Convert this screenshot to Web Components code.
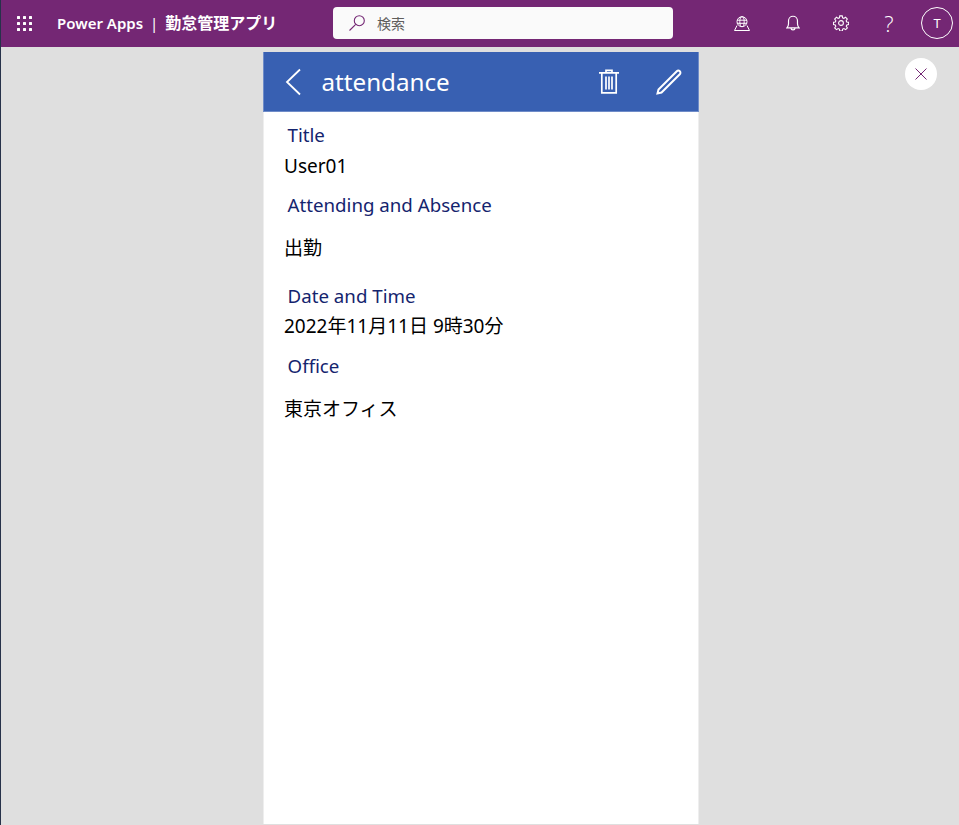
<!DOCTYPE html>
<html lang="ja">
<head>
<meta charset="utf-8">
<title>勤怠管理アプリ</title>
<style>
  html, body { margin: 0; height: 100%; }
  body { font-family: "Noto Sans", "Noto Sans CJK JP", sans-serif; overflow: hidden; }
</style>
</head>
<body>
<app-shell>
  <suite-bar slot="top"></suite-bar>
  <record-card>
    <record-field label="Title" value="User01" style="--value-line: 33px"></record-field>
    <record-field label="Attending and Absence" value="出勤" tall></record-field>
    <record-field label="Date and Time" value="2022年11月11日 9時30分"></record-field>
    <record-field label="Office" value="東京オフィス" tall></record-field>
  </record-card>
  <close-button slot="aside"></close-button>
</app-shell>

<script>
class AppShell extends HTMLElement {
  constructor () {
    super()
    this.attachShadow({ mode: 'open' }).innerHTML = `
    <style>
      :host {
        display: flex;
        flex-direction: column;
        width: 959px;
        height: 825px;
        box-sizing: border-box;
        border-left: 1px solid #27324a;
        background: #dfdfdf;
      }
      .stage {
        flex: 1;
        min-height: 0;
        display: grid;
        grid-template-columns: 262px 436px 1fr;
      }
      .aside {
        grid-column: 3;
        display: flex;
        justify-content: flex-end;
        padding: 11px 22px 0 0;
      }
      .main { grid-column: 2; min-height: 0; }
    </style>
    <slot name="top"></slot>
    <div class="stage">
      <div class="main"><slot></slot></div>
      <div class="aside"><slot name="aside"></slot></div>
    </div>`
  }
}

class SuiteBar extends HTMLElement {
  constructor () {
    super()
    const dots = []
    for (const y of [0, 6, 12]) {
      for (const x of [0, 6, 12]) {
        dots.push(`<rect x="${x}" y="${y}" width="3" height="3" rx=".5"/>`)
      }
    }
    this.attachShadow({ mode: 'open' }).innerHTML = `
    <style>
      :host {
        display: flex;
        align-items: center;
        height: 47px;
        box-sizing: border-box;
        padding-bottom: 1px;
        background: #742774;
        color: #fff;
        font-family: "Noto Sans", "Noto Sans CJK JP", sans-serif;
      }
      svg { display: block; fill: none; stroke: #fff; }
      .waffle { margin-left: 16px; fill: #fff; stroke: none; }
      .brand {
        margin: 0 0 2px 25px;
        width: 276px;
        font-size: 15px;
        font-weight: 600;
        white-space: nowrap;
      }
      .brand .sep { margin: 0 3px; font-weight: 400; }
      .brand .app { font-size: 16px; font-weight: 700; }
      .search {
        width: 340px;
        height: 32px;
        box-sizing: border-box;
        display: flex;
        align-items: center;
        gap: 11px;
        padding-left: 15px;
        background: #fafafa;
        border-radius: 4px;
        color: #605e5c;
        font-size: 14px;
      }
      .search svg { stroke: #742774; }
      .tools {
        margin-left: auto;
        display: flex;
        align-items: center;
        padding-right: 6px;
      }
      .tool {
        width: 48px;
        height: 46px;
        display: flex;
        align-items: center;
        justify-content: center;
      }
      .globe { margin-right: 3px; }
      .help { font-size: 22px; font-weight: 300; font-family: "Open Sans", sans-serif; }
      .avatar {
        width: 30px;
        height: 30px;
        margin-left: 8px;
        border: 1px solid #fff;
        border-radius: 50%;
        display: flex;
        align-items: center;
        justify-content: center;
        font-size: 13px;
      }
    </style>
    <svg class="waffle" width="15" height="15" viewBox="0 0 15 15">${dots.join('')}</svg>
    <div class="brand">Power Apps<span class="sep"> | </span><span class="app">勤怠管理アプリ</span></div>
    <div class="search">
      <svg width="18" height="18" viewBox="0 0 18 18" stroke-width="1.1">
        <circle cx="11.3" cy="6.7" r="5"/>
        <path d="M7.7 10.3 1.5 16.5"/>
      </svg>
      <span>検索</span>
    </div>
    <div class="tools">
      <div class="tool globe">
        <svg width="16" height="15" viewBox="0 0 16 15" stroke-width="1">
          <circle cx="8" cy="5.700" r="5"/>
          <ellipse cx="8" cy="5.700" rx="2.200" ry="5"/>
          <path d="M3 4.200h10M3 7.300h10M3 9.500.5 14.500h15L13 9.500"/>
        </svg>
      </div>
      <div class="tool">
        <svg width="14" height="16" viewBox="0 0 13 15" stroke-width="1.100">
          <path d="M.8 12h11.400c-.9-1-1.500-1.900-1.500-3.800V5.400a4.200 4.200 0 0 0-8.400 0v2.800c0 1.900-.6 2.800-1.500 3.800Z"/>
          <path d="M4.700 12.200a1.800 1.800 0 0 0 3.600 0"/>
        </svg>
      </div>
      <div class="tool">
        <svg width="16" height="16" viewBox="0 0 18 18" stroke-width="1.200">
          <circle cx="9" cy="9" r="2.700"/>
          <path d="M7.600 1h2.800l.4 2.200 1.400.6 1.900-1.300 2 2-1.300 1.900.6 1.400 2.200.4v2.600l-2.100.4-.6 1.400 1.300 1.900-2 2-1.900-1.300-1.400.6-.4 2.200H7.600l-.4-2.200-1.400-.6-1.900 1.300-2-2 1.300-1.900-.6-1.400-2.100-.4V8.200l2.100-.4.6-1.400-1.300-1.900 2-2 1.900 1.300 1.400-.6Z"/>
        </svg>
      </div>
      <div class="tool help">?</div>
      <div class="avatar">T</div>
    </div>`
  }
}

class RecordCard extends HTMLElement {
  constructor () {
    super()
    this.attachShadow({ mode: 'open' }).innerHTML = `
    <style>
      :host {
        display: flex;
        flex-direction: column;
        height: 772px;
        margin-top: 5px;
        background: #fff;
        font-family: "Noto Sans", "Noto Sans CJK JP", sans-serif;
      }
      header {
        height: 60px;
        box-sizing: border-box;
        flex: none;
        display: flex;
        align-items: center;
        background: #3860b2;
        border: 1px solid #6f8cc8;
        border-top: 0;
        color: #fff;
      }
      svg { display: block; fill: none; stroke: #fff; }
      .back { margin-left: 21px; }
      h1 {
        margin: 0 0 0 20.500px;
        font-size: 24.200px;
        font-weight: 400;
        flex: 1;
      }
      .trash { margin-right: 37px; }
      .pencil { margin-right: 16px; }
      .body {
        flex: 1;
        padding-top: 8px;
        border: solid #eee;
        border-width: 0 1px;
      }
    </style>
    <header>
      <svg class="back" width="16" height="28" viewBox="0 0 16 28" stroke-width="1.800">
        <path d="M15 1.500 2 14l13 12.500"/>
      </svg>
      <h1>attendance</h1>
      <svg class="trash" width="20" height="26" viewBox="0 0 20 26" stroke-width="1.700">
        <path d="M0 3.800h20M7 3.500V1.300h6v2.200M2.800 4v19.800h14.400V4M7 7.500v13M10 7.500v13M13 7.500v13"/>
      </svg>
      <svg class="pencil" width="26" height="26" viewBox="0 0 26 26" stroke-width="2">
        <path d="M20.800 2.200a2.100 2.100 0 0 1 3 3L5.500 23.500l-4 1 1-4Z"/>
      </svg>
    </header>
    <div class="body"><slot></slot></div>`
  }
}

class RecordField extends HTMLElement {
  constructor () {
    super()
    this.attachShadow({ mode: 'open' }).innerHTML = `
    <style>
      :host {
        display: block;
        padding: 0 20px;
        font-family: "Noto Sans", "Noto Sans CJK JP", sans-serif;
      }
      .label {
        height: 30px;
        line-height: 29px;
        padding-left: 3.600px;
        font-size: 18.700px;
        color: #14246e;
      }
      .value {
        height: 40px;
        line-height: var(--value-line, 31px);
        font-size: 19px;
        color: #000;
        white-space: nowrap;
      }
      :host([tall]) .value {
        height: 61px;
        line-height: 57px;
      }
    </style>
    <div class="label"></div>
    <div class="value"></div>`
  }

  connectedCallback () {
    this.shadowRoot.querySelector('.label').textContent = this.getAttribute('label')
    this.shadowRoot.querySelector('.value').textContent = this.getAttribute('value')
  }
}

class CloseButton extends HTMLElement {
  constructor () {
    super()
    this.attachShadow({ mode: 'open' }).innerHTML = `
    <style>
      :host {
        display: flex;
        align-items: center;
        justify-content: center;
        width: 32px;
        height: 32px;
        background: #fff;
        border-radius: 50%;
      }
      svg { display: block; }
    </style>
    <svg width="12" height="12" viewBox="0 0 12 12" fill="none" stroke="#742774" stroke-width="1">
      <path d="M.5.500l11 11M11.500.500l-11 11"/>
    </svg>`
  }
}

customElements.define('app-shell', AppShell)
customElements.define('suite-bar', SuiteBar)
customElements.define('record-card', RecordCard)
customElements.define('record-field', RecordField)
customElements.define('close-button', CloseButton)
</script>
</body>
</html>
